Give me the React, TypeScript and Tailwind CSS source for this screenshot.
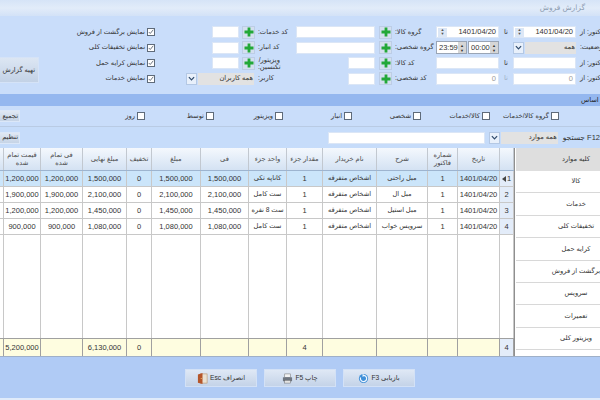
import type { ReactNode } from "react"

const FONT = "font-['Liberation_Sans','DejaVu_Sans',sans-serif]"

// column widths live in the grid template below, left to right as in the picture
const GRID_COLS = "grid grid-cols-[4px_37px_42px_44px_25px_49px_48px_38px_36px_54px_51px_30px_42px_14px]"

const HEADERS = [
  "",
  "قیمت تمام\nشده",
  "فی تمام\nشده",
  "مبلغ نهایی",
  "تخفیف",
  "مبلغ",
  "فی",
  "واحد جزء",
  "مقدار جزء",
  "نام خریدار",
  "شرح",
  "شماره\nفاکتور",
  "تاریخ",
  "",
]

const ROWS = [
  ["", "1,200,000", "1,200,000", "1,500,000", "0", "1,500,000", "1,500,000", "کاناپه تکی", "1", "اشخاص متفرقه", "مبل راحتی", "1", "1401/04/20", "1"],
  ["", "1,900,000", "1,900,000", "2,100,000", "0", "2,100,000", "2,100,000", "ست کامل", "1", "اشخاص متفرقه", "مبل ال", "1", "1401/04/20", "2"],
  ["", "1,200,000", "1,200,000", "1,450,000", "0", "1,450,000", "1,450,000", "ست 8 نفره", "1", "اشخاص متفرقه", "مبل استیل", "1", "1401/04/20", "3"],
  ["", "900,000", "900,000", "1,080,000", "0", "1,080,000", "1,080,000", "ست کامل", "1", "اشخاص متفرقه", "سرویس خواب", "1", "1401/04/20", "4"],
]

const FOOTER = ["", "5,200,000", "", "6,130,000", "0", "", "", "", "4", "", "", "", "", "4"]

const SIDE = ["کالا", "خدمات", "تخفیفات کلی", "کرایه حمل", "برگشت از فروش", "سرویس", "تعمیرات", "ویزیتور کلی"]

const GROUP_BY = ["گروه کالا/خدمات", "کالا/خدمات", "شخصی", "انبار", "ویزیتور", "توسط", "روز"]

// text columns of the grid (Persian), the rest are numbers and get the larger size
const TEXT_COLS = [7, 9, 10]

function Check({ on }: { on?: boolean }) {
  return (
    <span className="flex h-[8px] w-[8px] shrink-0 items-center justify-center border border-[#5f6b7a] bg-white">
      {on && (
        <svg viewBox="0 0 8 8" className="h-[6px] w-[6px]" fill="none" stroke="#6b7280" strokeWidth="1.3">
          <path d="M1 4l2 2 4-5" />
        </svg>
      )}
    </span>
  )
}

function Plus() {
  return (
    <span className="flex h-[13px] w-[13px] shrink-0 items-center justify-center border border-[#bccde6] bg-[#d3dfef]">
      <svg viewBox="0 0 10 10" className="h-[10px] w-[10px]" fill="#22a838">
        <path d="M3.6 0.5h2.8v3.1h3.1v2.8H6.4v3.1H3.6V6.4H0.5V3.6h3.1z" />
      </svg>
    </span>
  )
}

function Box({ className = "", children }: { className?: string; children?: ReactNode }) {
  return (
    <div className={`flex h-[12px] items-center border border-[#dbe6f6] bg-white px-[1px] text-[#333] ${className}`}>
      {children}
    </div>
  )
}

function Arrow() {
  return (
    <span className="flex h-[12px] w-[11px] shrink-0 items-center justify-center border border-[#b4c8e4] bg-[#e8f0fb]">
      <svg viewBox="0 0 8 8" className="h-[7px] w-[7px]" fill="none" stroke="#2f4a6b" strokeWidth="1.4">
        <path d="M1 2.5l3 3 3-3" />
      </svg>
    </span>
  )
}

function Combo({ text, className = "" }: { text: string; className?: string }) {
  return (
    <div className={`flex h-[12px] items-center gap-[1px] ${className}`}>
      <Arrow />
      <span dir="rtl" className="flex h-[12px] flex-1 items-center bg-[#e2e2e2] pr-[1px] text-[#333]">
        {text}
      </span>
    </div>
  )
}

function DateBox({ value }: { value: string }) {
  return (
    <Box className="w-[63px] justify-between text-[7.5px]">
      <span className="flex h-[9px] w-[9px] flex-col items-center justify-center bg-[#dce7f6] text-[4px] leading-[4px] text-[#555]">
        <span>▲</span>
        <span>▼</span>
      </span>
      <span className="pr-[1px]">{value}</span>
    </Box>
  )
}

function TimeBox({ value }: { value: string }) {
  return (
    <div className="flex h-[13px] w-[31px] items-center justify-between border border-[#9aa5b5] bg-white pl-[2px] text-[7.5px] text-[#333]">
      <span>{value}</span>
      <span className="flex h-full w-[9px] flex-col items-center justify-center bg-[#d6d6d6] text-[4px] leading-[5px] text-[#333]">
        <span>▲</span>
        <span>▼</span>
      </span>
    </div>
  )
}

function ShowCheck({ label }: { label: string }) {
  return (
    <div className="flex items-center justify-end gap-[2px] pr-[31px]">
      <span dir="rtl" className="text-[#333]">{label}</span>
      <Check on />
    </div>
  )
}

// w-max keeps the box starting at the cell's left edge, so long labels run off to the right
function Label({ children, className = "" }: { children: ReactNode; className?: string }) {
  return (
    <span dir="rtl" className={`w-max self-center justify-self-start whitespace-nowrap text-[#333] ${className}`}>
      {children}
    </span>
  )
}

function SmallButton({ text }: { text: string }) {
  return (
    <div
      dir="rtl"
      className="ml-[-13px] flex h-[12px] w-[33px] shrink-0 items-center border border-[#dbe7f8] bg-linear-to-b from-[#e0e8f3] to-[#c6d4e6] pr-[1px] text-[#333]"
    >
      <span className="whitespace-nowrap">{text}</span>
    </div>
  )
}

function DoorIcon() {
  return (
    <svg viewBox="0 0 12 12" className="h-[11px] w-[11px]">
      <rect x="4" y="1" width="7" height="10" fill="#e9e2d4" stroke="#b98c5a" strokeWidth="0.6" />
      <path d="M1 1.5 6 0v12L1 10.5z" fill="#b5562a" />
      <circle cx="4.6" cy="6" r="0.6" fill="#f4d27a" />
    </svg>
  )
}

function PrinterIcon() {
  return (
    <svg viewBox="0 0 12 12" className="h-[11px] w-[11px]">
      <rect x="3" y="1" width="6" height="4" fill="#f2f2f2" stroke="#777" strokeWidth="0.6" />
      <rect x="1" y="4.5" width="10" height="4.5" rx="0.6" fill="#6f7680" />
      <rect x="3" y="8" width="6" height="3" fill="#e4e4e4" stroke="#666" strokeWidth="0.5" />
    </svg>
  )
}

function RefreshIcon() {
  return (
    <svg viewBox="0 0 12 12" className="h-[11px] w-[11px]">
      <circle cx="6" cy="6" r="5" fill="#3f8fd8" />
      <path d="M6 2.6a3.4 3.4 0 1 1-3.2 2.3" fill="none" stroke="#f2f8ff" strokeWidth="1.3" />
      <path d="M5 0.8 7.4 2.6 5 4.4z" fill="#f2f8ff" />
    </svg>
  )
}

function ActionButton({ icon, text }: { icon: ReactNode; text: string }) {
  return (
    <div className="flex h-[18px] w-[72px] items-center justify-center gap-[2px] border border-[#d3e1f6] bg-linear-to-b from-[#dfe8f5] to-[#c4d3e8] text-[#333]">
      {icon}
      <span dir="rtl">{text}</span>
    </div>
  )
}

export default function App() {
  return (
    <div className={`flex h-[400px] w-[600px] flex-col overflow-hidden bg-[#c9ddfa] text-[6.7px] leading-none ${FONT}`}>
      {/* title bar */}
      <div className="flex h-[16px] shrink-0 items-center justify-end bg-linear-to-b from-[#d6e4f7] via-[#e2ecf9] to-[#d3e2f7] pr-[15px]">
        <span dir="rtl" className="text-[7.5px] text-[#8e9db2]">گزارش فروش</span>
      </div>

      {/* filters */}
      <div className="flex h-[78px] shrink-0">
        <div className="flex w-[40px] shrink-0 items-start overflow-hidden pt-[41px]">
          <div dir="rtl" className="ml-[-21px] flex h-[26px] w-[60px] shrink-0 items-center border border-[#d5e3f7] bg-linear-to-b from-[#dce6f3] to-[#c3d2e6] pr-[3px] text-[#333]">
            <span className="whitespace-nowrap">تهیه گزارش</span>
          </div>
        </div>
        <div className="grid flex-1 grid-cols-[146px_72px_38px_96px_44px_63px_14px_63px_24px] grid-rows-[12px_12px_12px_12px] gap-y-[3.6px] pt-[10px]">
          <ShowCheck label="نمایش برگشت از فروش" />
          <div className="flex items-center justify-end gap-[3px] pr-[3px]">
            <Box className="w-[27px]" />
            <Plus />
          </div>
          <Label>کد خدمات:</Label>
          <div className="flex items-center justify-end gap-[4px]">
            <Box className="flex-1" />
            <Plus />
          </div>
          <Label className="ml-[3px]">گروه کالا:</Label>
          <DateBox value="1401/04/20" />
          <span className="self-center text-center text-[#333]">تا</span>
          <DateBox value="1401/04/20" />
          <Label className="ml-[4px]">تاریخ فاکتور: از</Label>

          <ShowCheck label="نمایش تخفیفات کلی" />
          <div className="flex items-center justify-end gap-[3px] pr-[3px]">
            <Box className="w-[27px]" />
            <Plus />
          </div>
          <Label>کد انبار:</Label>
          <div className="flex items-center justify-end gap-[4px]">
            <Box className="flex-1" />
            <Plus />
          </div>
          <Label className="ml-[3px]">گروه شخصی:</Label>
          <div className="flex items-center justify-between">
            <TimeBox value="23:59" />
            <TimeBox value="00:00" />
          </div>
          <span />
          <Combo text="همه" />
          <Label className="ml-[4px]">وضعیت:</Label>

          <ShowCheck label="نمایش کرایه حمل" />
          <div className="flex items-center justify-end gap-[3px] pr-[3px]">
            <Box className="w-[27px]" />
            <Plus />
          </div>
          <Label className="text-center leading-[7px]">
            ویزیتور/
            <br />
            تکنسین:
          </Label>
          <div className="flex items-center justify-end gap-[4px]">
            <Box className="w-[27px]" />
            <Plus />
          </div>
          <Label className="ml-[3px]">کد کالا:</Label>
          <Box />
          <span className="self-center text-center text-[#333]">تا</span>
          <Box />
          <Label className="ml-[4px]">شماره فاکتور: از</Label>

          <ShowCheck label="نمایش خدمات" />
          <Combo text="همه کاربران" className="pr-[4px]" />
          <Label>کاربر:</Label>
          <div className="flex items-center justify-end gap-[4px]">
            <Box className="w-[27px]" />
            <Plus />
          </div>
          <Label className="ml-[3px]">کد شخصی:</Label>
          <Box className="justify-end text-[7.5px]"><span className="pr-[1px] text-[#9a9a9a]">0</span></Box>
          <span className="self-center text-center text-[#9fb0c6]">تا</span>
          <Box className="justify-end text-[7.5px]"><span className="pr-[1px] text-[#9a9a9a]">0</span></Box>
          <Label className="ml-[4px]">سری فاکتور: از</Label>
        </div>
      </div>

      {/* group by caption */}
      <div className="flex h-[12px] shrink-0 items-center justify-start overflow-hidden bg-[#94b7ef] pl-[581px]">
        <span dir="rtl" className="w-max shrink-0 whitespace-nowrap text-[#222]">گروه بندی بر اساس</span>
      </div>

      {/* group by checks */}
      <div className="flex h-[21px] shrink-0 items-center border-b border-[#b9cbe4] pr-[41px]">
        <SmallButton text="تجمیع" />
        <div className="ml-auto flex">
          {[...GROUP_BY].reverse().map((g) => (
            <div key={g} className="flex w-[69px] items-center justify-end gap-[2px]">
              <span dir="rtl" className="whitespace-nowrap text-[#333]">{g}</span>
              <Check />
            </div>
          ))}
        </div>
      </div>

      {/* search bar */}
      <div className="flex h-[21px] shrink-0 items-center bg-[#c6dcfa]">
        <SmallButton text="تنظیم" />
        <Box className="ml-[308px] w-[164px]" />
        <div className="ml-[4px] flex h-[12px] w-[72px] items-center gap-[1px]">
          <Arrow />
          <span dir="rtl" className="flex h-[12px] flex-1 items-center bg-[#e2e2e2] pr-[1px] text-[#333]">همه موارد</span>
        </div>
        <span dir="rtl" className="ml-[5px] w-max shrink-0 whitespace-nowrap text-[7.5px] text-[#333]">F12 جستجو</span>
      </div>

      {/* grid and side list */}
      <div className="flex h-[209px] shrink-0 border-b border-[#9fb0c8]">
        <div className="flex w-[514px] shrink-0 flex-col bg-white">
          <div className={`${GRID_COLS} h-[23px] shrink-0 border-b border-[#9db4cf] bg-linear-to-b from-[#f4f8fd] to-[#d4e2f3]`}>
            {HEADERS.map((h, i) => (
              <div key={i} dir="rtl" className="flex items-center justify-center whitespace-pre-line border-r border-[#c2c8d0] text-center leading-[8px] text-[#4a4a4a]">
                {h}
              </div>
            ))}
          </div>
          {ROWS.map((row, r) => (
            <div key={r} className={`${GRID_COLS} h-[16px] shrink-0 ${r === 0 ? "bg-[#cbe5fa]" : ""}`}>
              {row.map((c, i) => (
                <div
                  key={i}
                  dir={i === 12 ? "ltr" : "rtl"}
                  className={`flex items-center justify-center gap-[1px] whitespace-nowrap border-r border-b border-[#c8c8c8] text-[#333] ${TEXT_COLS.includes(i) ? "" : "text-[7.5px]"} ${i === 13 ? "bg-[#e3ecf9]" : ""}`}
                >
                  {c}
                  {i === 13 && r === 0 && (
                    <svg viewBox="0 0 4 6" className="h-[6px] w-[4px]" fill="#444">
                      <path d="M4 0v6L0 3z" />
                    </svg>
                  )}
                </div>
              ))}
            </div>
          ))}
          <div className={`${GRID_COLS} min-h-0 flex-1`}>
            {HEADERS.map((_, i) => (
              <div key={i} className="border-r border-[#c8c8c8]" />
            ))}
          </div>
          <div className={`${GRID_COLS} h-[18px] shrink-0 border-t border-[#a0a0a0] bg-[#fefde0]`}>
            {FOOTER.map((c, i) => (
              <div key={i} className={`flex items-center justify-center border-r border-[#a0a0a0] text-[7.5px] text-[#333] ${i === 13 ? "bg-[#e3ecf9]" : ""}`}>
                {c}
              </div>
            ))}
          </div>
        </div>
        <div className="flex flex-1 flex-col border-l border-[#8f8f8f] bg-white pl-[1px]">
          <div dir="rtl" className="flex h-[23px] w-[120px] shrink-0 items-center justify-center bg-[#dedede] text-[#333]">
            کلیه موارد
          </div>
          {SIDE.map((s) => (
            <div key={s} dir="rtl" className="flex h-[22.4px] w-[120px] shrink-0 items-center justify-center whitespace-nowrap border-b border-[#d8d8d8] text-[#333]">
              {s}
            </div>
          ))}
        </div>
      </div>

      {/* actions */}
      <div className="flex flex-1 flex-col bg-[#b0cbf5]">
        <div className="flex flex-1 items-start justify-center gap-[7px] pt-[12px]">
          <ActionButton icon={<DoorIcon />} text="انصراف Esc" />
          <ActionButton icon={<PrinterIcon />} text="چاپ F5" />
          <ActionButton icon={<RefreshIcon />} text="بازیابی F3" />
        </div>
        <div className="h-[2px] bg-[#e0ebfa]" />
      </div>
    </div>
  )
}
